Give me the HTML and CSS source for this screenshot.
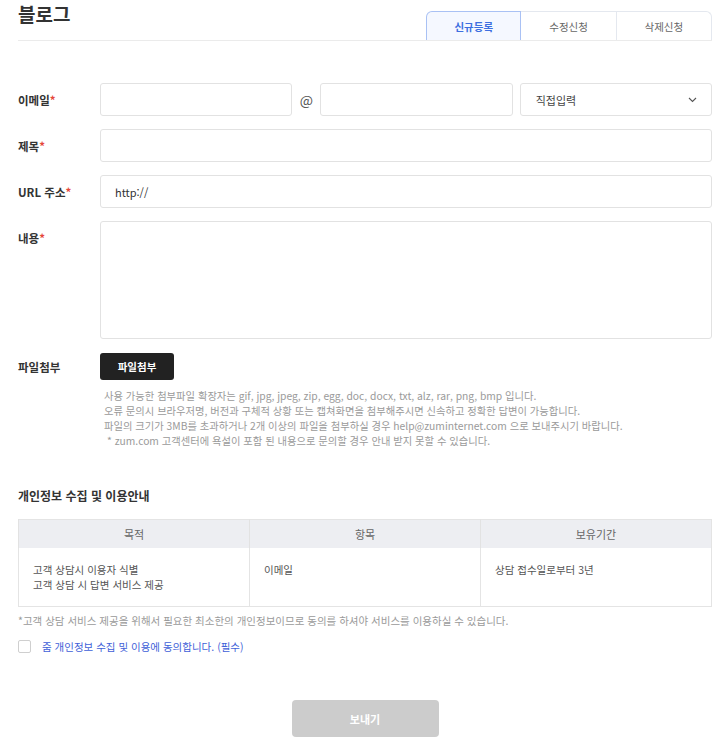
FILE: index.html
```html
<!DOCTYPE html>
<html lang="ko">
<head>
<meta charset="utf-8">
<title>블로그</title>
<link rel="stylesheet" href="styles.css">
</head>
<body>
<div class="page">
  <header class="head">
    <h1 class="title">블로그</h1>
    <nav class="tabs">
      <span class="tab active">신규등록</span>
      <span class="tab">수정신청</span>
      <span class="tab">삭제신청</span>
    </nav>
  </header>

  <form class="form">
    <div class="row">
      <label class="label">이메일<em>*</em></label>
      <div class="field email">
        <div class="input"></div>
        <span class="at">@</span>
        <div class="input"></div>
        <div class="input select"><span>직접입력</span>
          <svg width="9" height="6" viewBox="0 0 9 6"><path d="M1 1l3.5 3.5L8 1" fill="none" stroke="#555" stroke-width="1.1"/></svg>
        </div>
      </div>
    </div>
    <div class="row">
      <label class="label">제목<em>*</em></label>
      <div class="field"><div class="input"></div></div>
    </div>
    <div class="row">
      <label class="label">URL 주소<em>*</em></label>
      <div class="field"><div class="input url">http://</div></div>
    </div>
    <div class="row top">
      <label class="label">내용<em>*</em></label>
      <div class="field"><div class="input area"></div></div>
    </div>
    <div class="row file">
      <label class="label">파일첨부</label>
      <div class="field">
        <button type="button" class="btn-file">파일첨부</button>
        <ul class="notes">
          <li>사용 가능한 첨부파일 확장자는 gif, jpg, jpeg, zip, egg, doc, docx, txt, alz, rar, png, bmp 입니다.</li>
          <li>오류 문의시 브라우저명, 버전과 구체적 상황 또는 캡쳐화면을 첨부해주시면 신속하고 정확한 답변이 가능합니다.</li>
          <li>파일의 크기가 3MB를 초과하거나 2개 이상의 파일을 첨부하실 경우 help@zuminternet.com 으로 보내주시기 바랍니다.</li>
          <li class="star">* zum.com 고객센터에 욕설이 포함 된 내용으로 문의할 경우 안내 받지 못할 수 있습니다.</li>
        </ul>
      </div>
    </div>
  </form>

  <section class="privacy">
    <h2 class="sub">개인정보 수집 및 이용안내</h2>
    <table class="tbl">
      <thead>
        <tr><th>목적</th><th>항목</th><th>보유기간</th></tr>
      </thead>
      <tbody>
        <tr>
          <td>고객 상담시 이용자 식별<br>고객 상담 시 답변 서비스 제공</td>
          <td>이메일</td>
          <td>상담 접수일로부터 3년</td>
        </tr>
      </tbody>
    </table>
    <p class="foot">*고객 상담 서비스 제공을 위해서 필요한 최소한의 개인정보이므로 동의를 하셔야 서비스를 이용하실 수 있습니다.</p>
    <label class="agree"><span class="box"></span><span class="agree-txt">줌 개인정보 수집 및 이용에 동의합니다. (필수)</span></label>
  </section>

  <div class="submit-wrap"><button type="button" class="submit">보내기</button></div>
</div>
</body>
</html>
```

FILE: styles.css
```css
* { box-sizing: border-box; }
body {
  margin: 0;
  background: #fff;
  font-family: "Noto Sans CJK KR", "Noto Sans", sans-serif;
  color: #333;
}
.page { padding: 0 8px 0 18px; width: 720px; }

.head {
  display: flex;
  justify-content: space-between;
  align-items: flex-end;
  border-bottom: 1px solid #ebebeb;
  height: 41px;
}
.title {
  align-self: flex-start;
  margin: 0;
  font-size: 19px;
  line-height: 28px;
  font-weight: 700;
  color: #333;
}
.tabs { display: flex; }
.tab {
  width: 95.3px;
  height: 29px;
  display: flex;
  align-items: center;
  justify-content: center;
  font-size: 10.5px;
  color: #666;
  border: 1px solid #e4e8ef;
  border-bottom: none;
  border-left: none;
}
.tab:last-child { border-top-right-radius: 6px; }
.tab.active {
  border: 1px solid #a9c1f4;
  border-bottom: none;
  border-top-left-radius: 6px;
  background: #f5f8ff;
  color: #3d6fe0;
  font-weight: 700;
}

.form { margin-top: 42px; }
.row { display: flex; align-items: center; margin-bottom: 13px; }
.row.top { align-items: flex-start; margin-bottom: 14px; }
.row.top .label { padding-top: 9px; }
.row.file { align-items: flex-start; }
.row.file .label { padding-top: 6px; }
.label {
  width: 82px;
  flex: none;
  font-size: 11.5px;
  font-weight: 700;
  color: #333;
}
.label em { font-style: normal; color: #e5483b; }
.field { flex: 1; min-width: 0; }
.email {
  display: grid;
  grid-template-columns: minmax(0, 1fr) 28px minmax(0, 1fr) 7px minmax(0, 1fr);
  align-items: center;
}
.input {
  height: 33px;
  border: 1px solid #e2e2e2;
  border-radius: 3px;
  background: #fff;
  min-width: 0;
}
.at {
  text-align: center;
  font-size: 14px;
  color: #555;
}
.select {
  grid-column: 5;
  display: flex;
  align-items: center;
  justify-content: space-between;
  padding: 0 14px 0 15px;
  font-size: 11px;
  color: #444;
}
.url {
  display: flex;
  align-items: center;
  padding-left: 14px;
  font-size: 11px;
  color: #333;
}
.area { height: 118px; }

.btn-file {
  display: block;
  width: 74px;
  height: 27px;
  border: none;
  border-radius: 3px;
  background: #222;
  color: #fff;
  font-family: inherit;
  font-size: 10.5px;
  font-weight: 700;
  padding: 0;
}
.notes {
  list-style: none;
  margin: 8px 0 0;
  padding: 0 0 0 4px;
  font-size: 10.3px;
  line-height: 15px;
  color: #9a9a9a;
}
.notes .star { padding-left: 3px; }

.privacy { margin-top: 39px; }
.sub {
  margin: 0;
  font-size: 12px;
  font-weight: 700;
  line-height: 18px;
  color: #333;
}
.tbl {
  margin-top: 14px;
  width: 100%;
  border-collapse: collapse;
  table-layout: fixed;
  border: 1px solid #e4e4e4;
}
.tbl th {
  height: 28px;
  background: #edeef2;
  font-size: 11px;
  font-weight: 400;
  color: #666;
  border-left: 1px solid #e2e2e2;
}
.tbl td {
  height: 59px;
  vertical-align: top;
  padding: 14px 14px 0;
  font-size: 10.5px;
  line-height: 15px;
  color: #555;
  border-left: 1px solid #e4e4e4;
}
.foot {
  margin: 6px 0 0;
  font-size: 10.5px;
  line-height: 15px;
  color: #9a9a9a;
}
.agree {
  display: flex;
  align-items: center;
  margin-top: 11px;
}
.box {
  width: 13px;
  height: 13px;
  border: 1px solid #cfcfcf;
  border-radius: 2px;
  background: #fff;
}
.agree-txt {
  margin-left: 11px;
  font-size: 10.5px;
  color: #3f5fd8;
}
.submit-wrap {
  display: flex;
  justify-content: center;
  margin-top: 46px;
}
.submit {
  width: 147px;
  height: 37px;
  border: none;
  border-radius: 4px;
  background: #cccccc;
  color: #fff;
  font-family: inherit;
  font-size: 11px;
  font-weight: 700;
}
```
